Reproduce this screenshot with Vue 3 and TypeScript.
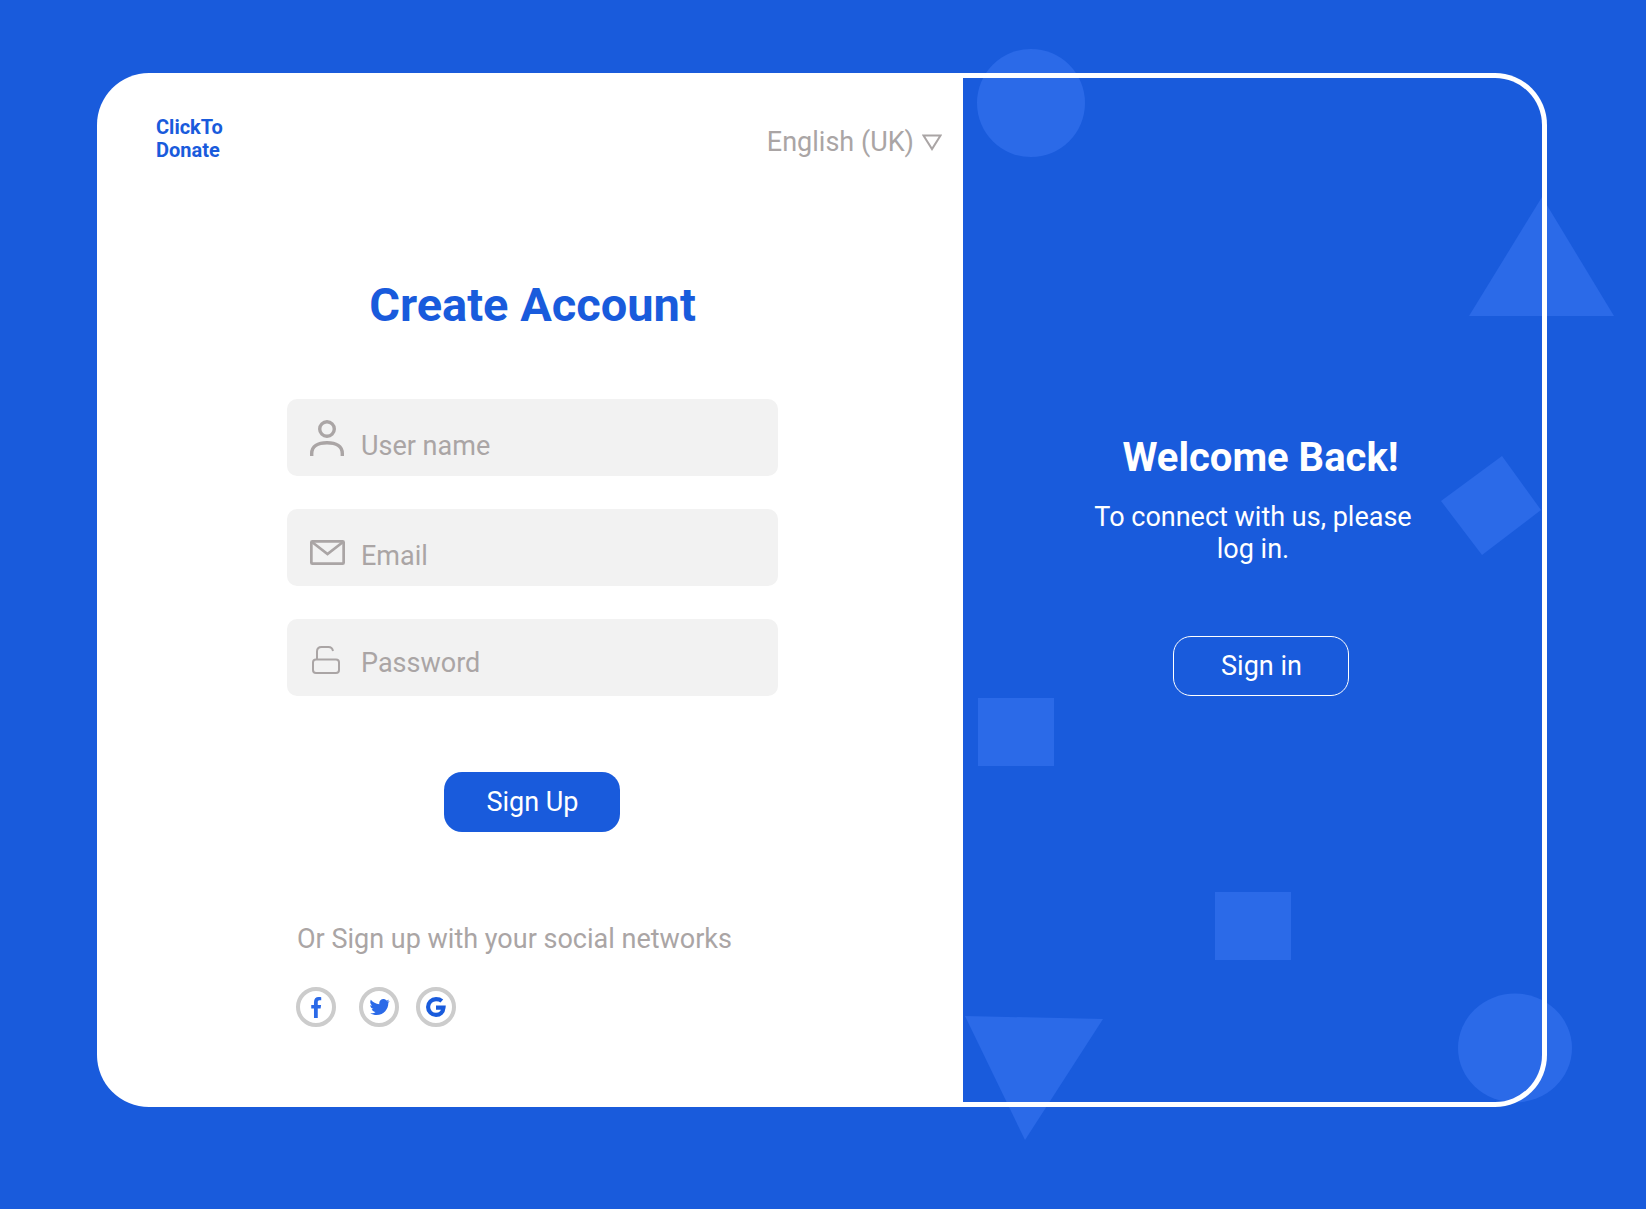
<script setup lang="ts">
const fields: { id: string; label: string }[] = [
  { id: 'user', label: 'User name' },
  { id: 'mail', label: 'Email' },
  { id: 'lock', label: 'Password' },
]
</script>

<template>
  <div class="page">
    <svg class="shapes" width="1646" height="1209" viewBox="0 0 1646 1209" aria-hidden="true">
      <circle cx="1031" cy="103" r="54" />
      <polygon points="1542,197 1469,316 1614,316" />
      <polygon points="1502,456 1541,510 1482,555 1441,501" />
      <rect x="978" y="698" width="76" height="68" />
      <rect x="1215" y="892" width="76" height="68" />
      <polygon points="965,1016 1103,1019 1025,1140" />
      <ellipse cx="1515" cy="1048" rx="57" ry="54.5" />
    </svg>

    <main class="card">
      <section class="left">
        <header class="top">
          <div class="logo">ClickTo<br />Donate</div>
          <div class="lang">
            <span>English (UK)</span>
            <svg width="20" height="17" viewBox="0 0 20 17">
              <path d="M1.500 1.500h17L10 15z" fill="none" stroke="#aaa5a5" stroke-width="2" />
            </svg>
          </div>
        </header>

        <div class="form">
          <h1>Create Account</h1>
          <div v-for="f in fields" :key="f.id" class="field" :class="f.id">
            <svg v-if="f.id === 'user'" width="34" height="36" viewBox="0 0 34 36" fill="none" stroke="#aaa5a5" stroke-width="3.400">
              <circle cx="17" cy="9" r="7.300" />
              <path d="M1.700 36v-2.500c0-7 6-10.800 15.300-10.800s15.300 3.800 15.300 10.800V36" />
            </svg>
            <svg v-else-if="f.id === 'mail'" width="35" height="25" viewBox="0 0 35 25" fill="none" stroke="#aaa5a5" stroke-width="2.700">
              <rect x="1.350" y="1.350" width="32.300" height="22.300" rx="1" />
              <path d="M2 2l15.500 12L33 2" />
            </svg>
            <svg v-else width="28" height="28" viewBox="0 0 28 28" fill="none" stroke="#aaa5a5" stroke-width="2">
              <rect x="1" y="13.500" width="26" height="13.500" rx="3" />
              <path d="M5 13.500V5.500C5 2.500 6.500 1 9.500 1h7c2.500 0 4 1.500 4.500 4" />
            </svg>
            <span>{{ f.label }}</span>
          </div>
          <button class="signup" type="button">Sign Up</button>
          <div class="social">
            <p>Or Sign up with your social networks</p>
            <div class="icons">
              <span class="ring">
                <svg width="11" height="21" viewBox="0 0 10 20">
                  <path fill="#2b6ae8" d="M2.600 20V11H0V7.600h2.600V5C2.600 1.800 4.300 0 7 0c1 0 1.900.1 2.500.2v3H7.900C6.700 3.200 6.200 3.900 6.200 5v2.600h3.200l-.5 3.400H6.200v9z" />
                </svg>
              </span>
              <span class="ring">
                <svg width="21" height="17" viewBox="0 0 25 20">
                  <path fill="#2b6ae8" d="M24.500 2.400c-.9.400-1.800.7-2.800.8 1-.6 1.800-1.600 2.200-2.700-1 .6-2 1-3.100 1.200C19.800.7 18.500 0 17.100 0c-2.700 0-4.900 2.200-4.900 4.900 0 .4 0 .8.100 1.100C8.200 5.800 4.600 3.900 2.200.9c-.4.700-.7 1.600-.7 2.500 0 1.700.9 3.200 2.200 4.100-.8 0-1.600-.2-2.200-.6v.1c0 2.400 1.700 4.400 3.900 4.800-.4.100-.8.200-1.300.2-.3 0-.6 0-.9-.1.600 2 2.400 3.400 4.600 3.400C7.100 16.100 5 16.900 2.700 16.900c-.4 0-.8 0-1.200-.1C3.700 18.200 6.300 19 9 19c9 0 14-7.500 14-14v-.6c1-.7 1.500-1.400 1.500-2z" />
                </svg>
              </span>
              <span class="ring">
                <svg width="20" height="20" viewBox="0 0 48 48">
                  <path fill="none" stroke="#195bdc" stroke-width="10" d="M38 9.500C34 6 29.500 5 24 5 13.500 5 5 13.500 5 24s8.500 19 19 19c10 0 17-6.500 18-17.500H24" />
                </svg>
              </span>
            </div>
          </div>
        </div>
      </section>

      <section class="right">
        <h2>Welcome Back!</h2>
        <p>To connect with us, please<br />log in.</p>
        <button class="signin" type="button">Sign in</button>
      </section>
    </main>
  </div>
</template>

<style scoped>
.page {
  position: relative;
  box-sizing: border-box;
  width: 1646px;
  height: 1209px;
  padding: 73px 99px 102px 97px;
  background: #195bdc;
  font-family: Roboto, sans-serif;
  overflow: hidden;
}
.shapes {
  position: absolute;
  left: 0;
  top: 0;
}
.shapes > * {
  fill: #2b6ae8;
}
.card {
  position: relative;
  display: flex;
  height: 1034px;
}
.left {
  box-sizing: border-box;
  width: 866px;
  background: #fff;
  border-radius: 52px 0 0 52px;
  color: #aaa5a5;
}
.top {
  display: flex;
  justify-content: space-between;
  padding: 43px 21px 0 59px;
}
.logo {
  font-size: 20px;
  line-height: 23px;
  font-weight: 700;
  color: #195bdc;
}
.lang {
  display: flex;
  align-items: center;
  gap: 8px;
  margin-top: 8px;
  height: 36px;
  font-size: 27px;
}
.form {
  display: flex;
  flex-direction: column;
  align-items: stretch;
  width: 491px;
  margin: 0 0 0 190px;
}
h1 {
  margin: 113px 0 64px;
  font-size: 47px;
  line-height: 60px;
  font-weight: 700;
  text-align: center;
  color: #195bdc;
}
.field {
  display: flex;
  align-items: flex-start;
  box-sizing: border-box;
  height: 77px;
  margin-bottom: 33px;
  border-radius: 10px;
  background: #f2f2f2;
  font-size: 27px;
}
.field svg {
  flex: none;
}
.field span {
  line-height: 32px;
}
.user svg { margin: 21px 0 0 23px; }
.user span { margin: 31px 0 0 17px; }
.mail svg { margin: 31px 0 0 23px; }
.mail span { margin: 31px 0 0 16px; }
.lock svg { margin: 27px 0 0 25px; }
.lock span { margin: 28px 0 0 21px; }
.signup {
  align-self: flex-start;
  width: 176px;
  height: 60px;
  margin: 43px 0 0 157px;
  padding-left: 7px;
  border: 0;
  border-radius: 18px;
  background: #195bdc;
  color: #fff;
  font: 400 27px Roboto, sans-serif;
}
.social {
  margin: 91px 0 0 9px;
}
.social p {
  margin: 0 0 0 1px;
  font-size: 27px;
  line-height: 32px;
}
.icons {
  display: flex;
  margin-top: 32px;
}
.ring {
  display: flex;
  align-items: center;
  justify-content: center;
  box-sizing: border-box;
  width: 40px;
  height: 40px;
  margin-right: 23px;
  border: 4px solid #ccc;
  border-radius: 50%;
}
.ring:nth-child(2) {
  margin-right: 17px;
}
.right {
  display: flex;
  flex-direction: column;
  align-items: center;
  box-sizing: border-box;
  width: 584px;
  border: 5px solid #fff;
  border-left: 0;
  border-radius: 0 52px 52px 0;
  color: #fff;
  padding-left: 16px;
}
h2 {
  margin: 356px 0 0;
  font-size: 40px;
  line-height: 48px;
  font-weight: 700;
}
.right p {
  margin: 20px 15px 0 0;
  font-size: 27px;
  line-height: 31.500px;
  text-align: center;
}
.signin {
  width: 176px;
  height: 60px;
  margin-top: 71px;
  padding-left: 8px;
  border: 1.500px solid #fff;
  border-radius: 18px;
  background: transparent;
  color: #fff;
  font: 400 27px Roboto, sans-serif;
}
</style>
